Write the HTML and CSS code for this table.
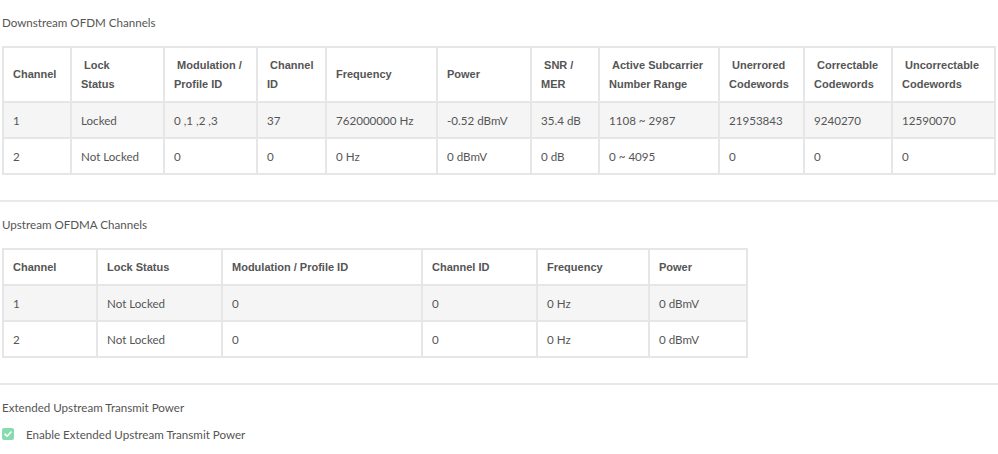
FILE: index.html
```html
<!DOCTYPE html>
<html>
<head>
<meta charset="utf-8">
<link rel="stylesheet" href="styles.css">
</head>
<body>
<section class="section first">
  <div class="title">Downstream OFDM Channels</div>
  <table class="grid down">
    <thead>
      <tr>
        <th>Channel</th>
        <th>&nbsp;Lock<br>Status</th>
        <th>&nbsp;Modulation /<br>Profile ID</th>
        <th>&nbsp;Channel<br>ID</th>
        <th>Frequency</th>
        <th>Power</th>
        <th>&nbsp;SNR /<br>MER</th>
        <th>&nbsp;Active Subcarrier<br>Number Range</th>
        <th>&nbsp;Unerrored<br>Codewords</th>
        <th>&nbsp;Correctable<br>Codewords</th>
        <th>&nbsp;Uncorrectable<br>Codewords</th>
      </tr>
    </thead>
    <tbody>
      <tr class="alt">
        <td>1</td><td>Locked</td><td>0 ,1 ,2 ,3</td><td>37</td><td>762000000 Hz</td><td>-0.52 dBmV</td><td>35.4 dB</td><td>1108 ~ 2987</td><td>21953843</td><td>9240270</td><td>12590070</td>
      </tr>
      <tr>
        <td>2</td><td>Not Locked</td><td>0</td><td>0</td><td>0 Hz</td><td>0 dBmV</td><td>0 dB</td><td>0 ~ 4095</td><td>0</td><td>0</td><td>0</td>
      </tr>
    </tbody>
  </table>
</section>
<hr class="sep">
<section class="section">
  <div class="title">Upstream OFDMA Channels</div>
  <table class="grid up">
    <thead>
      <tr>
        <th>Channel</th>
        <th>Lock Status</th>
        <th>Modulation / Profile ID</th>
        <th>Channel ID</th>
        <th>Frequency</th>
        <th>Power</th>
      </tr>
    </thead>
    <tbody>
      <tr class="alt">
        <td>1</td><td>Not Locked</td><td>0</td><td>0</td><td>0 Hz</td><td>0 dBmV</td>
      </tr>
      <tr>
        <td>2</td><td>Not Locked</td><td>0</td><td>0</td><td>0 Hz</td><td>0 dBmV</td>
      </tr>
    </tbody>
  </table>
</section>
<hr class="sep">
<section class="section">
  <div class="title">Extended Upstream Transmit Power</div>
  <label class="check">
    <span class="box"><svg width="12" height="12" viewBox="0 0 12 12"><path d="M3 6.2 L5.1 8.2 L9 4" fill="none" stroke="#fff" stroke-width="1.6" stroke-linecap="round" stroke-linejoin="round"/></svg></span>
    <span class="label">Enable Extended Upstream Transmit Power</span>
  </label>
</section>
</body>
</html>
```
FILE: styles.css
```css
html, body {
  margin: 0;
  padding: 0;
  background: #fff;
}
body {
  font-family: Lato, "Open Sans", sans-serif;
  font-size: 11.6px;
  color: #555;
}
.section {
  padding: 0 2px;
}
.section.first {
  padding-top: 15px;
}
.title {
  line-height: 16px;
  height: 16px;
  margin: 15px 0 15px;
  color: #555;
}
.section.first .title {
  margin-top: 0;
}
.sep {
  border: 0;
  border-top: 2px solid #e8eaea;
  margin: 25px 0 0;
  height: 0;
}
.grid {
  border-collapse: collapse;
  table-layout: fixed;
  border: 2px solid #e2e2e2;
}
.grid th, .grid td {
  box-sizing: border-box;
  border: 2px solid #e6e6e6;
  text-align: left;
  vertical-align: middle;
  padding: 0 0 0 9px;
  white-space: nowrap;
  overflow: hidden;
}
.grid th {
  font-family: "Liberation Sans", Arial, sans-serif;
  font-weight: bold;
  font-size: 11px;
  color: #555;
  line-height: 19px;
}
.grid td {
  height: 36px;
  color: #555;
}
.grid tr.alt td {
  background: #f5f5f5;
}
.down {
  width: 992px;
}
.down th {
  height: 55px;
}
.down th:nth-child(1) { width: 68px; }
.down th:nth-child(2) { width: 93px; }
.down th:nth-child(3) { width: 93px; }
.down th:nth-child(4) { width: 69px; }
.down th:nth-child(5) { width: 111px; }
.down th:nth-child(6) { width: 94px; }
.down th:nth-child(7) { width: 68px; }
.down th:nth-child(8) { width: 120px; }
.down th:nth-child(9) { width: 85px; }
.down th:nth-child(10) { width: 88px; }
.down th:nth-child(11) { width: 103px; }
.up {
  width: 744px;
}
.up th {
  height: 36px;
}
.up th:nth-child(1) { width: 94px; }
.up th:nth-child(2) { width: 125px; }
.up th:nth-child(3) { width: 200px; }
.up th:nth-child(4) { width: 115px; }
.up th:nth-child(5) { width: 112px; }
.up th:nth-child(6) { width: 98px; }
.check {
  display: flex;
  align-items: center;
  height: 16px;
  margin-top: -5px;
  gap: 12px;
}
.box {
  width: 12px;
  height: 12px;
  border-radius: 2px;
  background: #86dcb0;
  display: flex;
}
.label {
  color: #555;
}
```
